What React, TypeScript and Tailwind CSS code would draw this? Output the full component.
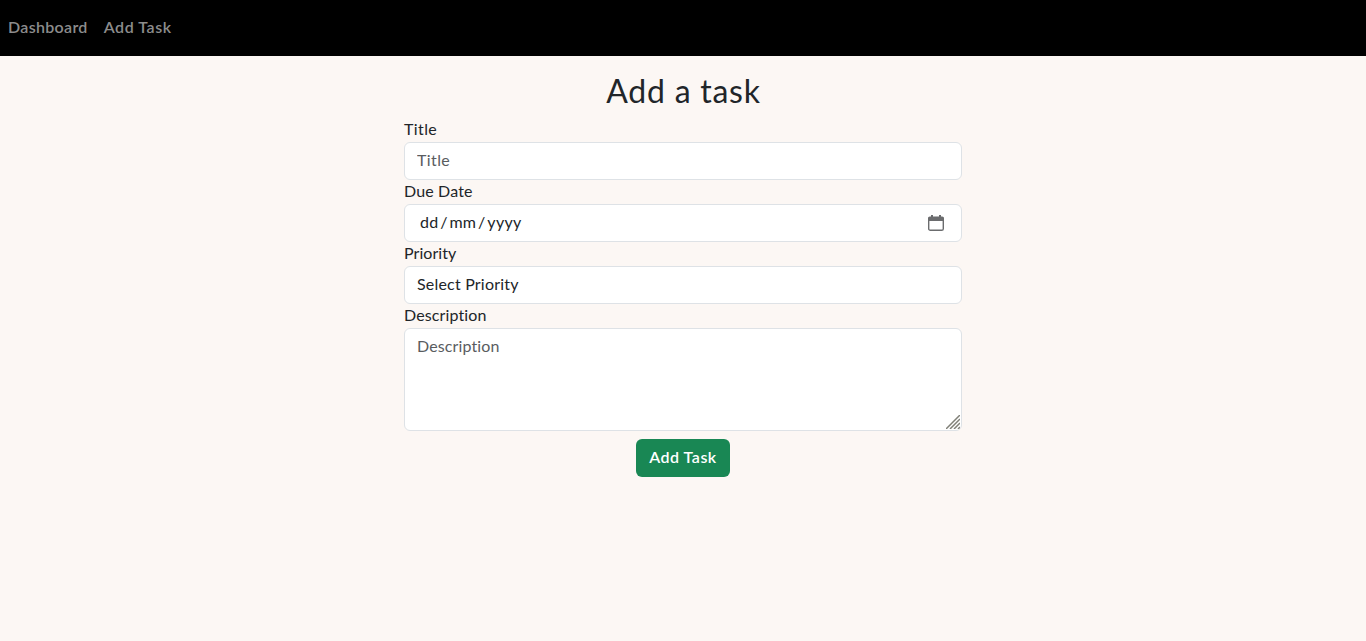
import type { ReactNode } from "react";

const control =
  "block w-full rounded-md border border-[#dee2e6] bg-white px-3 text-base leading-6 text-[#212529] outline-none placeholder:text-[#595c5f] placeholder:opacity-100";

function Field({ label, id, children }: { label: ReactNode; id: string; children: ReactNode }) {
  return (
    <div>
      <label htmlFor={id} className="block h-6 leading-[22px]">
        {label}
      </label>
      {children}
    </div>
  );
}

function CalendarIcon() {
  return (
    <svg width="16" height="16" viewBox="0 0 16 16" fill="none" aria-hidden="true">
      <rect x="0.7" y="2.7" width="14.6" height="12.6" rx="1.6" stroke="#6b6c6e" strokeWidth="1.4" />
      <path d="M1.8 1.5h12.4A1.8 1.8 0 0 1 16 3.3V6H0V3.3A1.8 1.8 0 0 1 1.8 1.5zM3 0h2v3H3zM11 0h2v3h-2z" fill="#6b6c6e" />
    </svg>
  );
}

export default function App() {
  return (
    <div className="min-h-screen bg-[#fcf7f4] font-[Lato,sans-serif] text-base text-[#212529]">
      <nav className="flex h-14 items-center gap-4 bg-black px-2 pb-0.5 font-semibold text-[#8c8c8c]">
        <a href="#" className="tracking-[0.32px]">Dashboard</a>
        <a href="#" className="tracking-[0.55px]">Add Task</a>
      </nav>
      <main className="mx-auto flex w-[558px] flex-col pt-4">
        <h1 className="mb-2 pl-px text-center text-[32px] leading-[38px] tracking-[0.75px]">Add a task</h1>
        <form className="flex flex-col">
          <Field id="title" label={<span className="tracking-[0.4px]">Title</span>}>
            <input id="title" className={`${control} h-[38px] pb-[3px] tracking-[0.4px]`} placeholder="Title" />
          </Field>
          <Field id="date" label={<span className="tracking-[0.15px]">Due Date</span>}>
            <div id="date" className={`${control} flex h-[38px] items-center`}>
              <span className="-mt-0.5 ml-[3px] tracking-[0.2px]">dd</span>
              <span className="-mt-0.5 mr-[2px] ml-[2px]">/</span>
              <span className="-mt-0.5 tracking-[0.1px]">mm</span>
              <span className="-mt-0.5 mr-[2px] ml-[2px]">/</span>
              <span className="-mt-0.5 tracking-[0.3px]">yyyy</span>
              <span className="mr-[5px] ml-auto">
                <CalendarIcon />
              </span>
            </div>
          </Field>
          <Field id="priority" label={<span className="tracking-[0.05px]">Priority</span>}>
            <div id="priority" className={`${control} flex h-[38px] items-center pb-0.5`}>
              <span className="tracking-[0.2px]">Select Priority</span>
            </div>
          </Field>
          <Field id="description" label={<span className="tracking-[0.12px]">Description</span>}>
            <div className="relative">
              <textarea
                id="description"
                className={`${control} h-[103px] resize-none pt-[5px] pb-1.5 tracking-[0.12px]`}
                placeholder="Description"
              />
              <svg className="absolute right-[2px] bottom-[2px]" width="14" height="14" viewBox="0 0 14 14" aria-hidden="true">
                <path d="M0 14L14 0M4 14L14 4M8 14l6-6M12 14l2-2" stroke="#808078" strokeWidth="1.5" />
              </svg>
            </div>
          </Field>
          <button type="button" className="mx-auto mt-2 h-[38px] w-[94px] rounded-md bg-[#198754] pb-0.5 font-semibold tracking-[0.5px] whitespace-nowrap text-white">
            Add Task
          </button>
        </form>
      </main>
    </div>
  );
}
